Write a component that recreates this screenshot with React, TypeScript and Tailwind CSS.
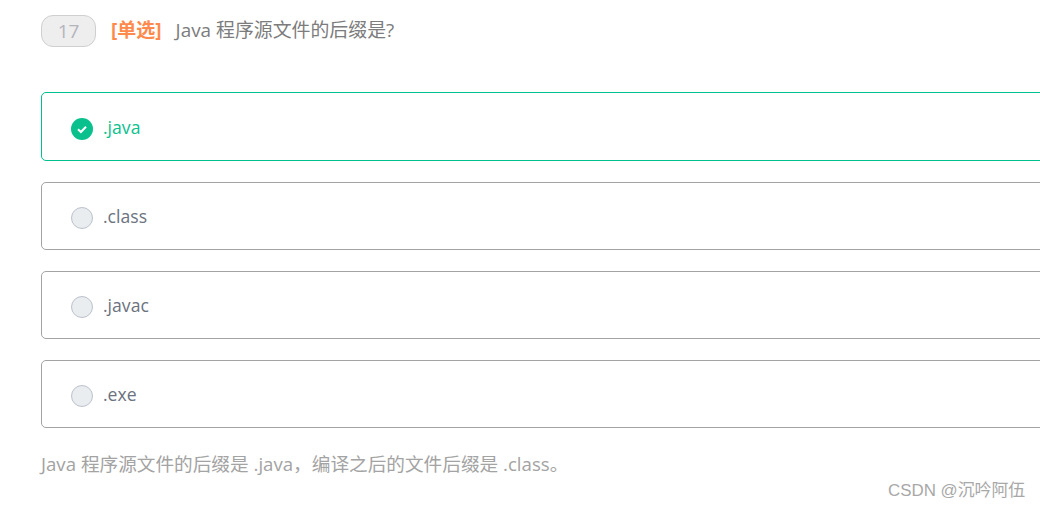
const fontStack = "font-['Open_Sans','Noto_Sans_CJK_SC',sans-serif]";

const options = [
  { label: ".java", selected: true },
  { label: ".class", selected: false },
  { label: ".javac", selected: false },
  { label: ".exe", selected: false },
];

function OptionRow({ label, selected }: { label: string; selected: boolean }) {
  return (
    <div
      className={`flex w-[1040px] items-center rounded-[5px] border pl-[29px] ${
        selected ? "h-[69px] border-[#00c08e]" : "h-[68px] border-[#a3a3a3]"
      }`}
    >
      {selected ? (
        <span className="mt-[4px] flex h-[22px] w-[22px] shrink-0 items-center justify-center rounded-full bg-[#0ac18e]">
          <svg width="14" height="14" viewBox="0 0 14 14" fill="none">
            <path d="M3 7.2 5.9 10 11 4.8" stroke="#fff" strokeWidth="2" />
          </svg>
        </span>
      ) : (
        <span className="mt-[4px] h-[22px] w-[22px] shrink-0 rounded-full border border-[#bcc2cc] bg-[#e9edf0]" />
      )}
      <span
        className={`mt-[2px] ml-[10px] text-[17.6px] leading-none ${
          selected ? "text-[#0ac18e]" : "text-[#6b7280]"
        }`}
      >
        {label}
      </span>
    </div>
  );
}

export default function App() {
  return (
    <div className={`relative h-[508px] w-[1040px] overflow-hidden bg-white ${fontStack}`}>
      <div className="pl-[41px] pt-[15px]">
        {/* Question header */}
        <div className="flex items-start">
          <span className="flex h-[32px] w-[55px] items-center justify-center rounded-[12px] border border-[#cfcfcf] bg-[#eeeeee] text-[19px] text-[#b5b5bd]">
            17
          </span>
          <span className="ml-[15px] text-[19px] leading-[30px] font-bold text-[#ff8a4c]">[单选]</span>
          <span className="ml-[14px] text-[18.9px] leading-[30px] text-[#7c7c7c]">Java 程序源文件的后缀是?</span>
        </div>

        {/* Options */}
        <div className="mt-[45px] flex flex-col gap-[21px]">
          {options.map((o) => (
            <OptionRow key={o.label} label={o.label} selected={o.selected} />
          ))}
        </div>

        <p className="mt-[21px] text-[18.65px] leading-[30px] text-[#a3a3a3]">
          Java 程序源文件的后缀是 .java，编译之后的文件后缀是 .class。
        </p>
      </div>

      {/* CSDN watermark */}
      <span className="absolute top-[480px] left-[888px] font-['Liberation_Sans','Noto_Sans_CJK_SC',sans-serif] text-[16.9px] leading-[22px] text-[#a8a8a8]">
        CSDN @沉吟阿伍
      </span>
    </div>
  );
}
